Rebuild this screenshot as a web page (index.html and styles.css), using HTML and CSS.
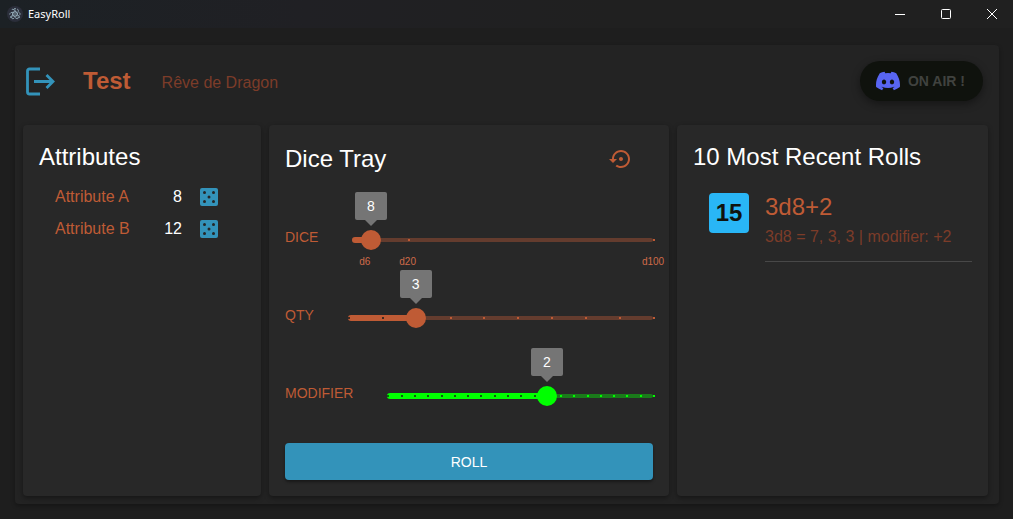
FILE: index.html
```html
<!DOCTYPE html>
<html lang="en">
<head>
<meta charset="utf-8">
<title>EasyRoll</title>
<link rel="stylesheet" href="styles.css">
</head>
<body>
<header class="titlebar">
  <svg class="app-icon" viewBox="0 0 16 16" aria-hidden="true">
    <circle cx="8" cy="8" r="8" fill="#2b2e3a"/>
    <g fill="none" stroke="#a3bfcb" stroke-width=".7" stroke-dasharray="9 2">
      <ellipse cx="8" cy="8" rx="5.4" ry="2"/>
      <ellipse cx="8" cy="8" rx="5.4" ry="2" transform="rotate(60 8 8)"/>
      <ellipse cx="8" cy="8" rx="5.4" ry="2" transform="rotate(120 8 8)"/>
    </g>
    <g fill="#a3bfcb"><circle cx="8" cy="8" r=".7"/><circle cx="8" cy="2.8" r=".8"/><circle cx="3.8" cy="11" r=".8"/><circle cx="12.2" cy="11" r=".8"/></g>
  </svg>
  <span class="app-name">EasyRoll</span>
  <div class="window-controls">
    <button class="window-button" aria-label="Minimize"><svg viewBox="0 0 12 12"><path d="M1 6.500h10"/></svg></button>
    <button class="window-button" aria-label="Maximize"><svg viewBox="0 0 12 12"><rect x="1.5" y="1.5" width="9" height="9" rx="1"/></svg></button>
    <button class="window-button" aria-label="Close"><svg viewBox="0 0 12 12"><path d="M1 1l10 10M11 1L1 11"/></svg></button>
  </div>
</header>
<main class="app">
  <div class="topbar">
    <button class="icon-button" aria-label="Leave">
      <svg class="exit-icon" viewBox="0 0 32 32"><path d="M16 4H5.500a2 2 0 0 0-2 2v21a2 2 0 0 0 2 2H16M10 16.500h19M22.500 10l6.500 6.500-6.500 6.500" fill="none" stroke="#3393ba" stroke-width="2.800"/></svg>
    </button>
    <h1 class="character">Test</h1>
    <span class="game">Rêve de Dragon</span>
    <button class="on-air">
      <svg class="discord" viewBox="0 0 24 24" aria-hidden="true"><path fill="#5865f2" d="M20.317 4.370a19.800 19.800 0 0 0-4.885-1.515.074.074 0 0 0-.079.037c-.21.375-.444.864-.608 1.250a18.270 18.270 0 0 0-5.487 0 12.640 12.640 0 0 0-.617-1.250.077.077 0 0 0-.079-.037A19.736 19.736 0 0 0 3.677 4.370a.07.07 0 0 0-.032.027C.533 9.046-.32 13.580.099 18.057a.082.082 0 0 0 .031.057 19.900 19.900 0 0 0 5.993 3.030.078.078 0 0 0 .084-.028 14.090 14.090 0 0 0 1.226-1.994.076.076 0 0 0-.041-.106 13.107 13.107 0 0 1-1.872-.892.077.077 0 0 1-.008-.128 10.200 10.200 0 0 0 .372-.292.074.074 0 0 1 .077-.01c3.928 1.793 8.180 1.793 12.062 0a.074.074 0 0 1 .078.01c.12.098.246.198.373.292a.077.077 0 0 1-.006.127 12.299 12.299 0 0 1-1.873.892.077.077 0 0 0-.041.107c.36.698.772 1.362 1.225 1.993a.076.076 0 0 0 .084.028 19.839 19.839 0 0 0 6.002-3.030.077.077 0 0 0 .032-.054c.5-5.177-.838-9.674-3.549-13.660a.061.061 0 0 0-.031-.03zM8.020 15.330c-1.183 0-2.157-1.085-2.157-2.419 0-1.333.956-2.419 2.157-2.419 1.210 0 2.176 1.096 2.157 2.420 0 1.333-.956 2.418-2.157 2.418zm7.975 0c-1.183 0-2.157-1.085-2.157-2.419 0-1.333.955-2.419 2.157-2.419 1.210 0 2.176 1.096 2.157 2.420 0 1.333-.946 2.418-2.157 2.418z"/></svg>
      ON AIR !
    </button>
  </div>
  <div class="panels">
    <section class="panel">
      <h2 class="panel-title">Attributes</h2>
      <table class="attributes">
        <tr>
          <th scope="row">Attribute A</th><td>8</td>
          <td class="roll-cell"><button class="icon-button" aria-label="Roll Attribute A"><svg class="die" viewBox="0 0 18 18"><rect width="18" height="18" rx="2" fill="#3393ba"/><g fill="#262626"><circle cx="4.500" cy="4.500" r="1.500"/><circle cx="13.500" cy="4.500" r="1.500"/><circle cx="9" cy="9" r="1.500"/><circle cx="4.500" cy="13.500" r="1.500"/><circle cx="13.500" cy="13.500" r="1.500"/></g></svg></button></td>
        </tr>
        <tr>
          <th scope="row">Attribute B</th><td>12</td>
          <td class="roll-cell"><button class="icon-button" aria-label="Roll Attribute B"><svg class="die" viewBox="0 0 18 18"><rect width="18" height="18" rx="2" fill="#3393ba"/><g fill="#262626"><circle cx="4.500" cy="4.500" r="1.500"/><circle cx="13.500" cy="4.500" r="1.500"/><circle cx="9" cy="9" r="1.500"/><circle cx="4.500" cy="13.500" r="1.500"/><circle cx="13.500" cy="13.500" r="1.500"/></g></svg></button></td>
        </tr>
      </table>
    </section>
    <section class="panel tray">
      <div class="tray-head">
        <h2 class="panel-title">Dice Tray</h2>
        <button class="icon-button" aria-label="Reset"><svg class="reset" viewBox="0 0 24 24"><path fill="#bf5b35" d="M14 12c0-1.100-.9-2-2-2s-2 .9-2 2 .9 2 2 2 2-.9 2-2zm-2-9c-4.970 0-9 4.030-9 9H0l4 4 4-4H5c0-3.870 3.130-7 7-7s7 3.130 7 7-3.130 7-7 7c-1.510 0-2.910-.49-4.060-1.300l-1.420 1.440C8.040 20.300 9.940 21 12 21c4.970 0 9-4.030 9-9s-4.030-9-9-9z"/></svg></button>
      </div>
      <div class="slider-row">
        <label for="dice">DICE</label>
        <div class="slider" data-marks="6:d6 20:d20 100:d100">
          <input id="dice" type="range" min="2" max="100" value="8">
          <output class="bubble" for="dice">8</output>
        </div>
      </div>
      <div class="slider-row">
        <label for="qty">QTY</label>
        <div class="slider" data-step="1">
          <input id="qty" type="range" min="1" max="10" value="3">
          <output class="bubble" for="qty">3</output>
        </div>
      </div>
      <div class="slider-row">
        <label for="modifier">MODIFIER</label>
        <div class="slider slider-green" data-step="1">
          <input id="modifier" type="range" min="-10" max="10" value="2">
          <output class="bubble" for="modifier">2</output>
        </div>
      </div>
      <button class="roll">ROLL</button>
    </section>
    <section class="panel">
      <h2 class="panel-title">10 Most Recent Rolls</h2>
      <article class="result">
        <strong class="total">15</strong>
        <div class="result-text">
          <h3 class="formula">3d8+2</h3>
          <p class="detail">3d8 = 7, 3, 3 | modifier: +2</p>
        </div>
      </article>
    </section>
  </div>
</main>
<script src="sliders.js"></script>
</body>
</html>
```
FILE: styles.css
```css
* { box-sizing: border-box; }
html { background: #1e1e1e; }
body {
  display: flex;
  flex-direction: column;
  min-height: 100vh;
  margin: 0;
  color: #fff;
  font: 16px/24px "Liberation Sans", Arial, sans-serif;
}
button { border: 0; font: inherit; cursor: pointer; }
svg { display: block; }
h1, h2, h3, p { margin: 0; font-weight: 400; }

.titlebar {
  display: flex;
  align-items: center;
  gap: 5px;
  height: 28px;
  padding-left: 7px;
  overflow: hidden;
  background: linear-gradient(90deg, #1c2125, #202024 30%, #202020 60%);
}
.app-icon { width: 16px; height: 16px; }
.app-name { font: 11px/16px "Noto Sans", sans-serif; }
.window-controls { display: flex; margin: 0 -2px 0 auto; }
.window-button {
  display: grid;
  place-items: center;
  width: 46px;
  height: 26px;
  padding: 0;
  background: none;
}
.window-button svg { width: 12px; height: 12px; fill: none; stroke: #fff; }

.app {
  display: flex;
  flex: 1;
  flex-direction: column;
  margin: 17px 14px 15px 15px;
  padding: 0 11px 8px 8px;
  border-radius: 4px;
  background: #232323;
  box-shadow: 0 2px 4px rgba(0, 0, 0, .3);
}
.topbar {
  display: flex;
  align-items: center;
  height: 80px;
  padding: 0 5px 8px 1px;
}
.icon-button { padding: 0; background: none; }
.exit-icon { width: 32px; height: 32px; }
.character { margin-left: 27px; color: #bf5b35; font-size: 24px; font-weight: 700; line-height: 32px; }
.game { margin: 3px 0 0 31px; color: #7c3c29; }
.on-air {
  display: flex;
  align-items: center;
  gap: 8px;
  height: 40px;
  margin-left: auto;
  padding: 0 18px 0 16px;
  border-radius: 20px;
  background: #0f120d;
  color: #40423f;
  font-size: 14px;
  font-weight: 700;
  box-shadow: 0 3px 8px rgba(0, 0, 0, .4);
}
.discord { width: 24px; height: 24px; }

.panels {
  display: grid;
  flex: 1;
  grid-template-columns: 238fr 400fr 311fr;
  gap: 8px;
}
.panel {
  min-width: 0;
  padding: 16px;
  border-radius: 4px;
  background: #282828;
  box-shadow: 0 2px 5px rgba(0, 0, 0, .4);
}
.panel-title { font-size: 24px; line-height: 32px; }

.attributes { margin: 8px 0 0 16px; border-collapse: collapse; }
.attributes th, .attributes td { height: 32px; padding: 0; font-weight: 400; }
.attributes th { width: 82px; color: #bf5b35; text-align: left; }
.attributes td { width: 45px; text-align: right; }
.attributes .roll-cell { width: 36px; }
.die { width: 18px; height: 18px; }
.roll-cell .icon-button { display: block; margin-left: auto; }

.tray { display: flex; flex-direction: column; }
.tray-head {
  display: flex;
  align-items: center;
  justify-content: space-between;
  height: 36px;
  padding-right: 20px;
}
.reset { width: 24px; height: 24px; }
.slider-row {
  display: flex;
  align-items: center;
  gap: 34px;
  height: 78px;
  color: #bf5b35;
  font-size: 14px;
}
.tray-head + .slider-row { margin-top: 24px; }
.slider-row label { margin-top: -6px; }
.slider {
  --main: #bf5b35;
  --rail: #643c2e;
  --active-mark: #3d2a22;
  position: relative;
  flex: 1;
  height: 20px;
}
.slider-green { --main: #0f0; --rail: #1a7a1a; --active-mark: #0b600b; }
.slider::before, .slider::after {
  position: absolute;
  top: 8px;
  left: 0;
  width: 100%;
  height: 4px;
  border-radius: 2px;
  background: var(--rail);
  content: "";
}
.slider::after {
  top: 7px;
  width: var(--position);
  height: 6px;
  border-radius: 3px;
  background: var(--main);
}
.slider input {
  position: absolute;
  z-index: 2;
  top: 0;
  left: -10px;
  width: calc(100% + 20px);
  height: 20px;
  margin: 0;
  appearance: none;
  background: none;
}
.slider input::-webkit-slider-thumb {
  width: 20px;
  height: 20px;
  appearance: none;
  border-radius: 50%;
  background: var(--main);
}
.mark {
  position: absolute;
  z-index: 1;
  top: 9px;
  width: 2px;
  height: 2px;
  background: var(--main);
}
.mark-active { background: var(--active-mark); }
.mark-label {
  position: absolute;
  top: 26px;
  color: #cf6a48;
  font-size: 10px;
  line-height: 12px;
  transform: translateX(-50%);
}
.bubble {
  position: absolute;
  z-index: 3;
  bottom: 30px;
  left: var(--position);
  width: 32px;
  height: 28px;
  margin-left: -16px;
  border-radius: 2px;
  background: #757575;
  color: #fff;
  line-height: 28px;
  text-align: center;
}
.bubble::after {
  position: absolute;
  top: 28px;
  left: 10px;
  border: 6px solid transparent;
  border-top-color: #757575;
  border-bottom: 0;
  content: "";
}
.roll {
  height: 37px;
  margin-top: auto;
  border-radius: 4px;
  background: #3393ba;
  color: #fff;
  font-size: 14px;
  box-shadow: 0 2px 3px rgba(0, 0, 0, .4);
}

.result { display: flex; gap: 16px; padding: 20px 0 0 16px; }
.total {
  width: 40px;
  height: 40px;
  border-radius: 4px;
  background: #29b6f6;
  color: #10130e;
  font-size: 24px;
  line-height: 40px;
  text-align: center;
}
.result-text { flex: 1; padding-bottom: 12px; border-bottom: 1px solid #484848; }
.formula { color: #bf5b35; font-size: 24px; line-height: 28px; }
.detail { margin-top: 4px; color: #7c3c29; white-space: nowrap; }
```
FILE: sliders.js
```js
document.querySelectorAll('.slider').forEach((slider) => {
  const input = slider.querySelector('input');
  const bubble = slider.querySelector('.bubble');
  const min = Number(input.min);
  const max = Number(input.max);
  const percent = (value) => `${(value - min) / (max - min) * 100}%`;
  const marks = [];

  function addMark(value, text) {
    const mark = document.createElement('span');
    mark.className = 'mark';
    mark.style.left = percent(value);
    slider.append(mark);
    marks.push({ mark, value });
    if (text) {
      const label = document.createElement('span');
      label.className = 'mark-label';
      label.textContent = text;
      label.style.left = percent(value);
      slider.append(label);
    }
  }

  if (slider.dataset.marks) {
    slider.dataset.marks.split(' ').forEach((entry) => {
      const [value, text] = entry.split(':');
      addMark(Number(value), text);
    });
  } else {
    for (let value = min; value <= max; value += Number(slider.dataset.step)) addMark(value);
  }

  function update() {
    slider.style.setProperty('--position', percent(input.value));
    bubble.textContent = input.value;
    marks.forEach(({ mark, value }) => mark.classList.toggle('mark-active', value <= input.value));
  }
  input.addEventListener('input', update);
  update();
});
```
